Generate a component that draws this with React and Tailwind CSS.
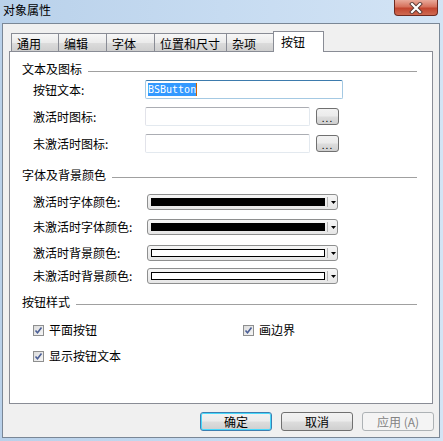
import React from "react";

const btnBg = "bg-[linear-gradient(180deg,#f2f2f2_0%,#ebebeb_48%,#dddddd_52%,#cfcfcf_100%)]";

function CloseButton() {
    return (
        <div className="mr-[5px] flex h-[16px] w-[44px] items-center justify-center rounded-b-[4px] border border-t-0 border-[#6e2a20] bg-[linear-gradient(180deg,#e9a99a_0%,#d6715c_45%,#c2452f_55%,#cf6a52_100%)]">
            <svg width="14" height="12" viewBox="0 0 14 12">
                <path d="M3 2 L11 10 M11 2 L3 10" stroke="#5a3a36" strokeWidth="4" strokeLinecap="square" />
                <path d="M3 2 L11 10 M11 2 L3 10" stroke="#ffffff" strokeWidth="2.2" strokeLinecap="square" />
            </svg>
        </div>
    );
}

function Tab({ label, width, active }) {
    if (active) {
        return (
            <div className={`relative z-10 -mb-px h-[21px] ${width} border border-b-0 border-[#898c95] bg-white pl-[7px] pt-[3px] text-[12px] leading-[14px]`}>
                {label}
            </div>
        );
    }
    return (
        <div className={`h-[18px] ${width} border border-b-0 border-r-0 border-[#898c95] bg-[linear-gradient(180deg,#f7f7f7_0%,#ebebeb_50%,#dcdcdc_51%,#cfcfcf_100%)] pl-[5px] pt-[3px] text-[12px] leading-[14px]`}>
            {label}
        </div>
    );
}

function Section({ title, className = "" }) {
    return (
        <div className={`flex h-[16px] items-center pl-[12px] pr-[15px] ${className}`}>
            <span className="text-[12px] leading-[14px]">{title}</span>
            <div className="ml-[6px] mt-[5px] h-px flex-1 bg-[#a0a0a0]" />
        </div>
    );
}

function TextBox({ width, focused, children }) {
    const border = focused
        ? "border-[#a4c9e3] border-t-[#3d7bad]"
        : "border-[#e3e9ef] border-t-[#abadb3] border-l-[#e2e3ea]";
    return (
        <div className={`flex h-[19px] ${width} items-center rounded-[2px] border bg-white pl-[2px] ${border}`}>
            {children}
        </div>
    );
}

function DotsButton() {
    return (
        <div className={`ml-[6px] flex h-[17px] w-[23px] items-end justify-center rounded-[3px] border border-[#707070] ${btnBg} pb-[1px] text-[10px] leading-[10px] tracking-[1px]`}>
            ...
        </div>
    );
}

function ColorCombo({ dark, className = "" }) {
    return (
        <div className={`flex h-[16px] w-[191px] items-center rounded-[3px] border border-[#8e8f8f] bg-[linear-gradient(180deg,#f6f6f6,#e6e6e6)] pl-[3px] ${className}`}>
            <div className={`h-[8px] w-[174px] border border-black ${dark ? "bg-black" : "bg-white"}`} />
            <div className="ml-[2px] h-[10px] w-px bg-[#b5b5b5]" />
            <svg className="ml-[3px]" width="5" height="3" viewBox="0 0 5 3">
                <path d="M0 0 H5 L2.5 3 Z" fill="#000" />
            </svg>
        </div>
    );
}

function Row({ label, labelWidth = "w-[112px]", className = "", height = "h-[19px]", children }) {
    return (
        <div className={`flex ${height} items-center pl-[23px] ${className}`}>
            <span className={`${labelWidth} text-[12px] leading-[14px]`}>{label}</span>
            {children}
        </div>
    );
}

function Check({ label, width = "" }) {
    return (
        <div className={`flex items-center ${width}`}>
            <div className="flex h-[11px] w-[11px] items-center justify-center border border-[#8e8f8f] bg-[linear-gradient(135deg,#dcdcdc,#f6f6f6)]">
                <svg width="9" height="9" viewBox="0 0 9 9">
                    <path d="M1.5 4.5 L3.5 6.8 L7.5 1.5" stroke="#4b5f96" strokeWidth="1.6" fill="none" />
                </svg>
            </div>
            <span className="ml-[5px] text-[12px] leading-[14px]">{label}</span>
        </div>
    );
}

function DialogButton({ label, variant }) {
    const style =
        variant === "default"
            ? `border-[#3c7fb1] shadow-[inset_0_0_0_1px_#48d8fb] ${btnBg} text-black`
            : variant === "disabled"
            ? "border-[#adb2b5] bg-[#f4f4f4] text-[#838383]"
            : `border-[#707070] ${btnBg} text-black`;
    return (
        <div className={`flex h-[19px] w-[72px] items-center justify-center rounded-[3px] border ${style} text-[12px] leading-[14px]`}>
            {label}
        </div>
    );
}

export default function App() {
    return (
        <div className="flex h-[441px] w-[443px] flex-col bg-[linear-gradient(90deg,#b9d1ea_0%,#c6dbf1_50%,#d3e4f5_100%)] font-['Noto_Sans_CJK_SC','Noto_Sans',sans-serif] text-black">
            <div className="flex h-[23px] items-start justify-between">
                <span className="pl-[3px] pt-[3px] text-[12px] leading-[14px]">对象属性</span>
                <CloseButton />
            </div>
            <div className="ml-[2px] flex h-[415px] w-[438px] flex-col border border-[#7a8796] bg-[#f0f0f0]">
                <div className="flex h-[27px] items-end pl-[8px]">
                    <Tab label="通用" width="w-[47px]" />
                    <Tab label="编辑" width="w-[48px]" />
                    <Tab label="字体" width="w-[48px]" />
                    <Tab label="位置和尺寸" width="w-[72px]" />
                    <Tab label="杂项" width="w-[47px]" />
                    <Tab label="按钮" width="w-[51px]" active />
                </div>
                <div className="ml-[6px] h-[353px] w-[424px] border border-[#898c95] bg-white pt-[9px]">
                    <Section title="文本及图标" />
                    <Row label="按钮文本:" className="mt-[3px]">
                        <TextBox width="w-[198px]" focused>
                            <span className="bg-[#3399ff] font-['DejaVu_Sans_Mono',monospace] text-[10px] leading-[13px] text-white">BSButton</span>
                            <span className="h-[13px] w-px bg-[#cc6600]" />
                        </TextBox>
                    </Row>
                    <Row label="激活时图标:" className="mt-[8px]">
                        <TextBox width="w-[165px]" />
                        <DotsButton />
                    </Row>
                    <Row label="未激活时图标:" className="mt-[8px]">
                        <TextBox width="w-[165px]" />
                        <DotsButton />
                    </Row>
                    <Section title="字体及背景颜色" className="mt-[14px]" />
                    <Row label="激活时字体颜色:" labelWidth="w-[114px]" height="h-[16px]" className="mt-[11px]">
                        <ColorCombo dark />
                    </Row>
                    <Row label="未激活时字体颜色:" labelWidth="w-[114px]" height="h-[16px]" className="mt-[9px]">
                        <ColorCombo dark />
                    </Row>
                    <Row label="激活时背景颜色:" labelWidth="w-[114px]" height="h-[16px]" className="mt-[10px]">
                        <ColorCombo />
                    </Row>
                    <Row label="未激活时背景颜色:" labelWidth="w-[114px]" height="h-[16px]" className="mt-[7px]">
                        <ColorCombo />
                    </Row>
                    <Section title="按钮样式" className="mt-[10px]" />
                    <div className="mt-[12px] flex h-[16px] items-center pl-[23px]">
                        <Check label="平面按钮" width="w-[210px]" />
                        <Check label="画边界" />
                    </div>
                    <div className="mt-[10px] flex h-[16px] items-center pl-[23px]">
                        <Check label="显示按钮文本" />
                    </div>
                </div>
                <div className="mt-[8px] flex justify-end gap-[9px] pr-[5px]">
                    <DialogButton label="确定" variant="default" />
                    <DialogButton label="取消" />
                    <DialogButton label="应用 (A)" variant="disabled" />
                </div>
            </div>
        </div>
    );
}
